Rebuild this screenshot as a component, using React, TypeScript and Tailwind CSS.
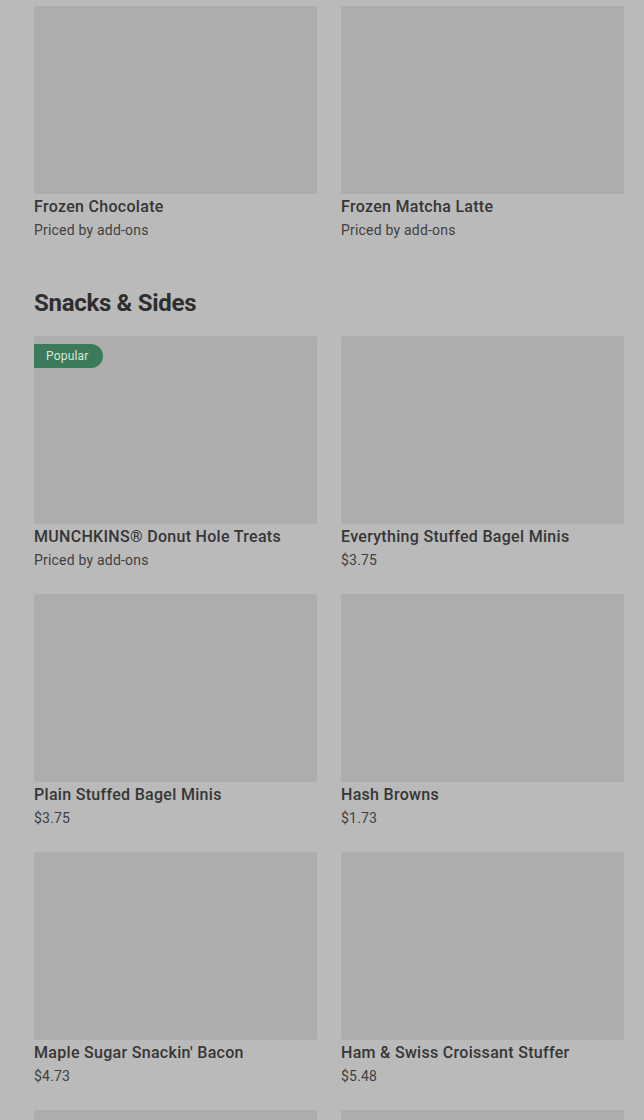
const frozen = [
  { name: "Frozen Chocolate", price: "Priced by add-ons" },
  { name: "Frozen Matcha Latte", price: "Priced by add-ons" },
];

const snacks = [
  { name: "MUNCHKINS® Donut Hole Treats", price: "Priced by add-ons", popular: true },
  { name: "Everything Stuffed Bagel Minis", price: "$3.75" },
  { name: "Plain Stuffed Bagel Minis", price: "$3.75" },
  { name: "Hash Browns", price: "$1.73" },
  { name: "Maple Sugar Snackin' Bacon", price: "$4.73" },
  { name: "Ham & Swiss Croissant Stuffer", price: "$5.48" },
  { name: "", price: "" },
  { name: "", price: "" },
];

type Item = { name: string; price: string; popular?: boolean };

function ItemCard({ item }: { item: Item }) {
  return (
    <div className="flex flex-col">
      <div className="relative h-[188px] rounded-[2px] bg-[#adadad]">
        {item.popular && (
          <span className="absolute left-0 top-[8px] flex h-[24px] items-center rounded-r-full bg-[#3c7b59] pl-[12px] pr-[14px] text-[12px] tracking-[0.2px] text-[#d8e6dc]">
            Popular
          </span>
        )}
      </div>
      <div className="mt-[3px] h-[20px] text-[16px] leading-[20px] font-medium tracking-[0.3px] text-[#363636] whitespace-nowrap">
        {item.name}
      </div>
      <div className="mt-[3px] h-[20px] text-[14px] leading-[20px] tracking-[0.2px] text-[#3f3f3f]">
        {item.price}
      </div>
    </div>
  );
}

export default function App() {
  return (
    <div
      className="min-h-[1120px] overflow-hidden bg-[#bababa] pl-[34px] pr-[20px] pt-[6px]"
      style={{ fontFamily: "Roboto, 'Liberation Sans', sans-serif" }}
    >
      <div className="grid grid-cols-2 gap-x-[24px] gap-y-[24px]">
        {frozen.map((item, i) => (
          <ItemCard key={i} item={item} />
        ))}
      </div>

      <h2 className="mt-[47px] h-[32px] text-[24px] leading-[32px] font-bold tracking-[-0.3px] text-[#2e2e2e]">
        Snacks &amp; Sides
      </h2>

      <div className="mt-[17px] grid grid-cols-2 gap-x-[24px] gap-y-[24px]">
        {snacks.map((item, i) => (
          <ItemCard key={i} item={item} />
        ))}
      </div>
    </div>
  );
}
